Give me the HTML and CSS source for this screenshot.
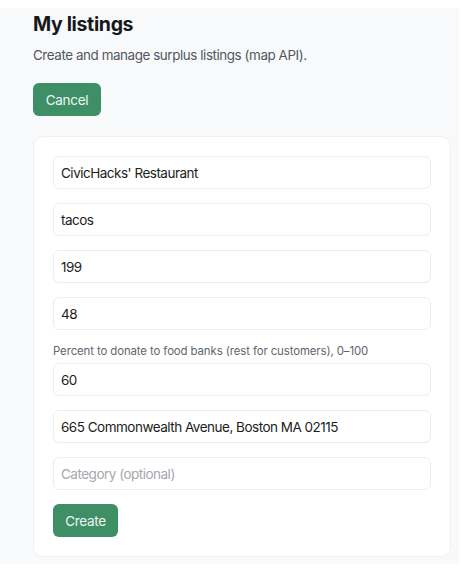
FILE: index.html
```html
<!DOCTYPE html>
<html>
<head>
<meta charset="utf-8">
<link rel="stylesheet" href="styles.css">
</head>
<body>
<main class="page">
  <h1 class="title">My listings</h1>
  <p class="subtitle">Create and manage surplus listings (map API).</p>
  <button class="btn btn-cancel">Cancel</button>
  <form class="card">
    <input class="field" value="CivicHacks' Restaurant">
    <input class="field" value="tacos">
    <input class="field" value="199">
    <input class="field" value="48">
    <div class="group">
      <label class="label">Percent to donate to food banks (rest for customers), 0–100</label>
      <input class="field" value="60">
    </div>
    <input class="field" value="665 Commonwealth Avenue, Boston MA 02115">
    <input class="field" placeholder="Category (optional)">
    <div><button type="button" class="btn btn-create">Create</button></div>
  </form>
</main>
</body>
</html>
```

FILE: styles.css
```css
html, body {
  margin: 0;
  padding: 0;
  background: #ffffff;
}
body {
  padding: 8px 3px 9px 0;
  font-family: Inter, "Noto Sans", sans-serif;
  color: #1a1d21;
}
.page {
  background: #f8f9fa;
  padding: 1px 8px 8px 33px;
  box-sizing: border-box;
  height: 556px;
}
.title {
  margin: 0;
  font-size: 19.5px;
  font-weight: 700;
  line-height: 30px;
  color: #15181c;
  letter-spacing: -0.35px;
}
.subtitle {
  margin: 7px 0 0;
  font-size: 13.4px;
  line-height: 18px;
  color: #52575e;
  letter-spacing: -0.42px;
}
.btn {
  border: none;
  border-radius: 6px;
  background: #3f8f66;
  color: #eef6f1;
  font-family: Inter, "Noto Sans", sans-serif;
  font-size: 13.5px;
  letter-spacing: -0.3px;
  height: 33px;
  cursor: pointer;
}
.btn-cancel {
  margin-top: 19px;
  width: 68px;
  display: block;
}
.btn-create {
  width: 65px;
}
.card {
  margin-top: 20px;
  background: #ffffff;
  border: 1px solid #eef0f2;
  border-radius: 10px;
  padding: 19px;
  display: flex;
  flex-direction: column;
  gap: 14px;
}
.group {
  display: flex;
  flex-direction: column;
  gap: 4px;
}
.label {
  font-size: 11.4px;
  line-height: 15px;
  color: #5f656c;
  letter-spacing: -0.1px;
}
.field {
  height: 33px;
  box-sizing: border-box;
  border: 1px solid #ebedef;
  border-radius: 6px;
  padding: 0 7px;
  font-family: Inter, "Noto Sans", sans-serif;
  font-size: 13.5px;
  letter-spacing: -0.5px;
  color: #1a1d21;
  background: #fff;
  outline: none;
}
.field::placeholder {
  color: #a4a8ad;
}
```
